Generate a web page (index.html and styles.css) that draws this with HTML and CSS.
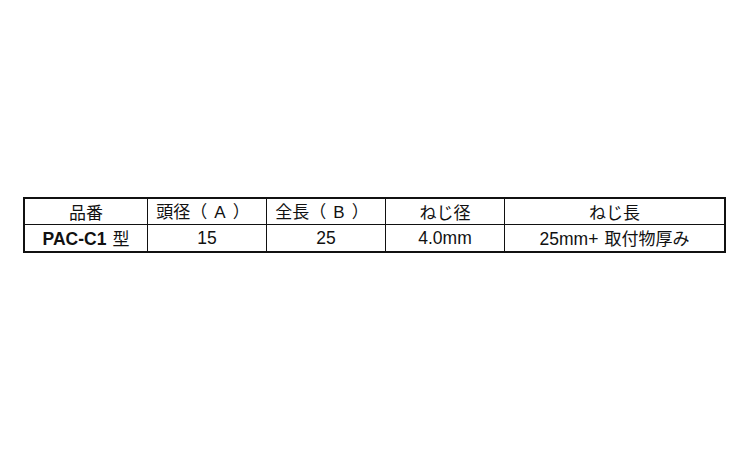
FILE: index.html
```html
<!DOCTYPE html>
<html lang="ja">
<head>
<meta charset="utf-8">
<link rel="stylesheet" href="styles.css">
</head>
<body>
<div class="spec">
  <div class="cell"><span class="txt jp">品番</span></div>
  <div class="cell paren"><span class="txt"><span class="jp">頭径（</span><span class="par">A</span><span class="jp">）</span></span></div>
  <div class="cell paren"><span class="txt"><span class="jp">全長（</span><span class="par">B</span><span class="jp">）</span></span></div>
  <div class="cell"><span class="txt jp">ねじ径</span></div>
  <div class="cell last"><span class="txt jp">ねじ長</span></div>
  <div class="cell bottom"><span class="txt"><b class="model">PAC-C1</b><span class="jp gap">型</span></span></div>
  <div class="cell bottom"><span class="txt">15</span></div>
  <div class="cell bottom"><span class="txt">25</span></div>
  <div class="cell bottom"><span class="txt">4.0mm</span></div>
  <div class="cell bottom last"><span class="txt">25mm+<span class="jp gap">取付物厚み</span></span></div>
</div>
</body>
</html>
```

FILE: styles.css
```css
html, body {
  margin: 0;
  padding: 0;
  background: #fff;
}
body {
  width: 750px;
  height: 450px;
  padding-top: 197px;
  padding-left: 23px;
  box-sizing: border-box;
  font-family: "Liberation Sans", "Noto Sans CJK JP", sans-serif;
  color: #111;
}
.spec {
  width: 703px;
  box-sizing: border-box;
  border: 2px solid #111;
  display: grid;
  grid-template-columns: 123px 119px 119px 119px 1fr;
  grid-template-rows: 26px 26px;
}
.cell {
  box-sizing: border-box;
  border-right: 1px solid #111;
  border-bottom: 1px solid #111;
  display: flex;
  align-items: center;
  justify-content: center;
  font-size: 17.5px;
  white-space: nowrap;
}
.cell.paren {
  padding-right: 8px;
}
.cell.last {
  border-right: none;
}
.cell.bottom {
  border-bottom: none;
}
.txt {
  line-height: 20px;
}
.jp {
  font-family: "Noto Sans CJK JP", sans-serif;
  font-size: 17px;
}
.par {
  margin: 0 7px;
  font-size: 17px;
}
.gap {
  margin-left: 6px;
}
.model {
  font-weight: bold;
}
```
